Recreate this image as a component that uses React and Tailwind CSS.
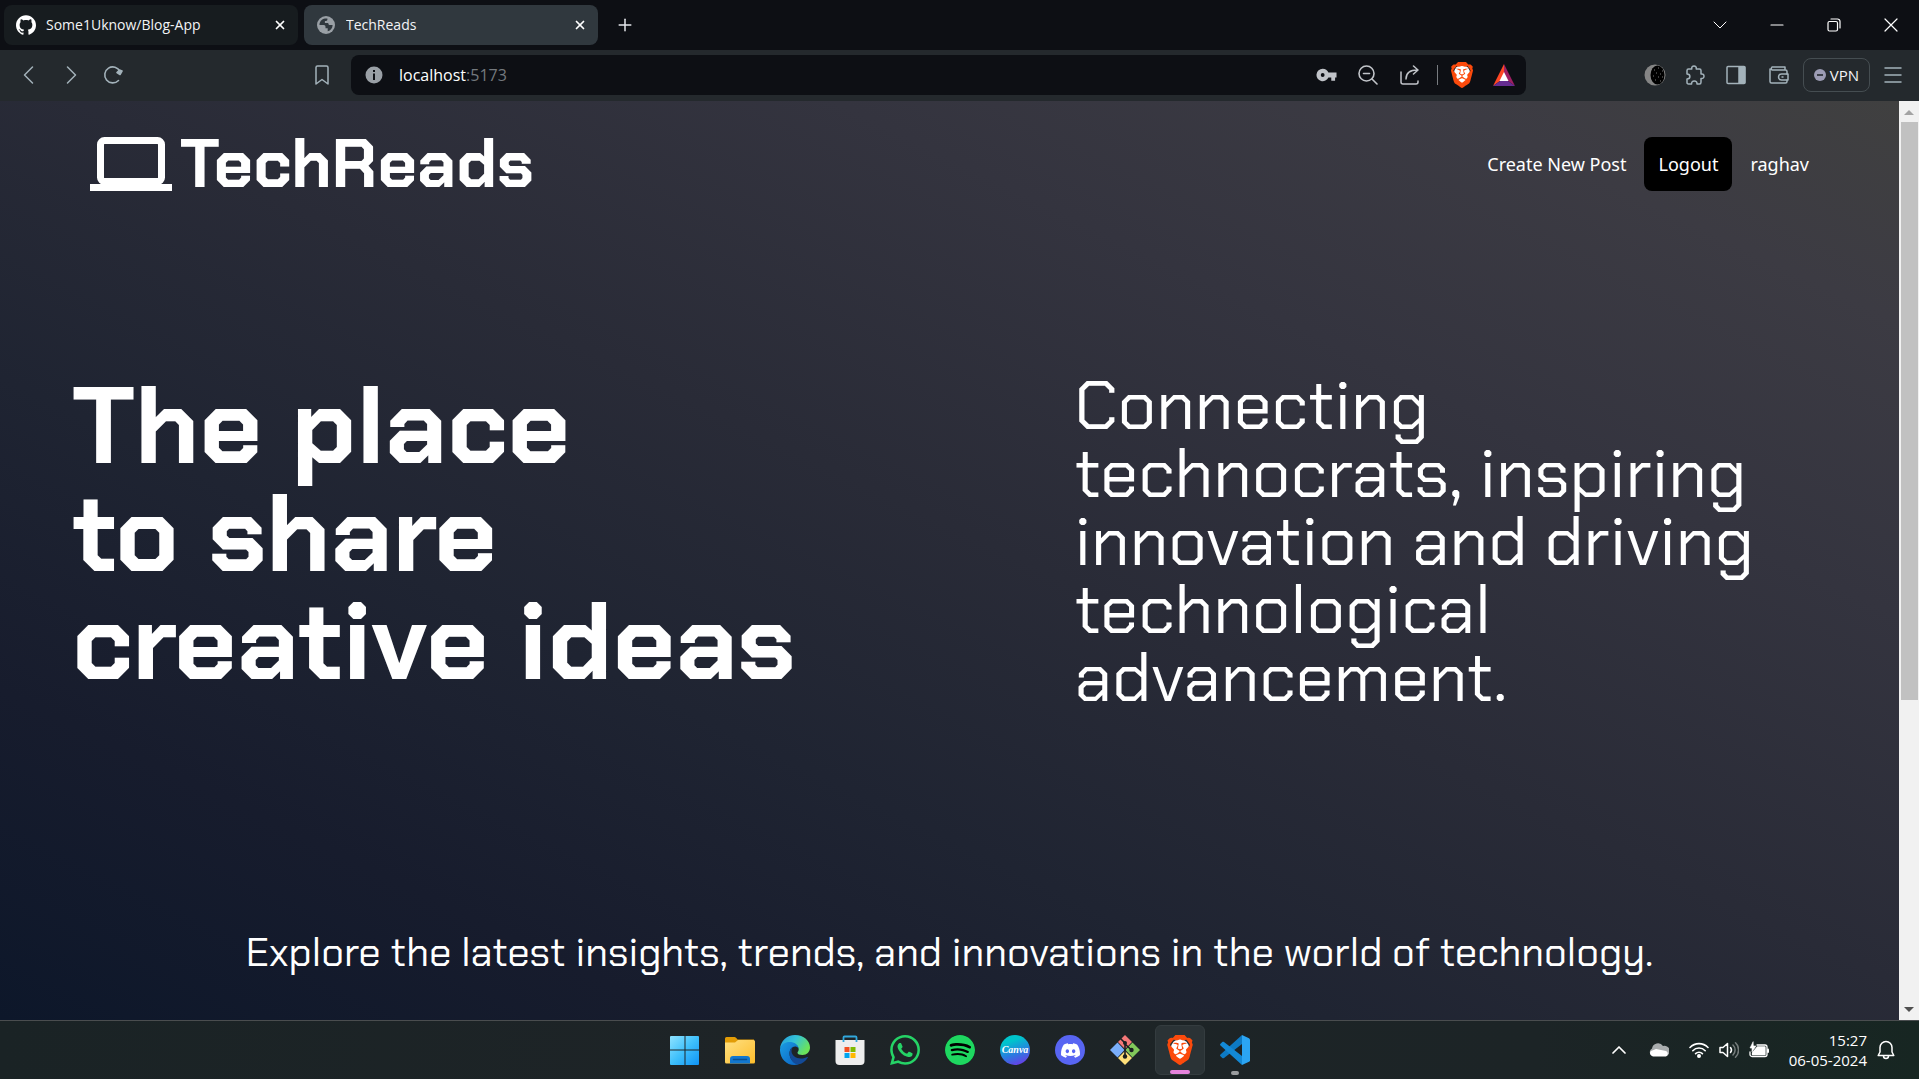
import React from "react";
import { SiGithub, SiWhatsapp, SiSpotify, SiDiscord, SiBrave } from "react-icons/si";
import { X, Plus } from "lucide-react";

const line = { fill: "none", stroke: "currentColor", strokeLinecap: "round", strokeLinejoin: "round" };

function Svg({ box = "0 0 24 24", className, children, sw = 1.5 }) {
  return (
    <svg viewBox={box} className={className} {...line} strokeWidth={sw} aria-hidden="true">
      {children}
    </svg>
  );
}

function BraveLion({ className }) {
  return (
    <span className={"relative grid place-items-center " + className}>
      <span className="absolute h-3/4 w-3/5 rounded-full bg-white" />
      <SiBrave className="relative h-full w-full text-[#fb4a0c]" />
    </span>
  );
}

function Tab({ active, icon, title }) {
  return (
    <div
      className={
        "flex h-10 w-[294px] items-center rounded-lg pl-3 pr-2 " + (active ? "bg-[#30383e]" : "bg-[#171c1f]")
      }
    >
      {icon}
      <span className="ml-2.5 flex-1 truncate text-sm text-gray-100">{title}</span>
      <button aria-label={"Close " + title} className="grid size-5 place-items-center text-white">
        <X size={14} strokeWidth={3} />
      </button>
    </div>
  );
}

function Globe() {
  return (
    <svg viewBox="0 0 20 20" className="size-5 shrink-0" aria-hidden="true">
      <circle cx="10" cy="10" r="9" fill="#9aa0a6" />
      <path
        d="M9 3.5C5.6 4 3.4 6.800 3.500 10h4.200c1.300 0 1.800.8 1.800 1.900v1.300h2.200v3.100c2.900-.8 4.900-3.300 4.900-6.300h-2.800c-.9 0-1.500-.7-1.500-1.500V8H8.900V5.900H10c.9 0 1.400-.5 1.400-1.400v-.9C10.600 3.400 9.800 3.400 9 3.500z"
        fill="#30383e"
      />
    </svg>
  );
}

function TitleBar() {
  return (
    <div className="flex h-[50px] items-center bg-[#0d0f14] pl-1">
      <div className="flex items-center gap-1.5">
        <Tab title="Some1Uknow/Blog-App" icon={<SiGithub className="size-5 shrink-0 text-white" />} />
        <Tab active title="TechReads" icon={<Globe />} />
      </div>
      <button aria-label="New tab" className="ml-[15px] grid size-6 place-items-center text-gray-200">
        <Plus size={20} strokeWidth={1.8} />
      </button>
      <div className="ml-auto flex text-white">
        <button aria-label="Search tabs" className="grid h-10 w-[57px] place-items-center">
          <Svg box="0 0 14 14" className="size-3.5" sw={1}><path d="M1 4l6 6 6-6" /></Svg>
        </button>
        <button aria-label="Minimize" className="grid h-10 w-[57px] place-items-center">
          <Svg box="0 0 14 14" className="size-3.5" sw={1.2}><path d="M1 7h12" /></Svg>
        </button>
        <button aria-label="Restore" className="grid h-10 w-[57px] place-items-center">
          <Svg box="0 0 14 14" className="size-3.5" sw={1.2}>
            <rect x="1" y="3.500" width="9.500" height="9.500" rx="1.500" />
            <path d="M4 1h6.500A2.500 2.500 0 0 1 13 3.500V10" />
          </Svg>
        </button>
        <button aria-label="Close window" className="grid h-10 w-[57px] place-items-center">
          <Svg box="0 0 14 14" className="size-3.5" sw={1.2}><path d="M1 1l12 12M13 1L1 13" /></Svg>
        </button>
      </div>
    </div>
  );
}

function BatTriangle() {
  return (
    <svg viewBox="0 0 24 24" className="size-6" aria-hidden="true">
      <path d="M12 1L1 23l11-8z" fill="#ff4724" />
      <path d="M12 1l11 22-11-8z" fill="#9e1f63" />
      <path d="M1 23h22l-7-5H8z" fill="#662d91" />
      <path d="M12 9L7.500 18h9z" fill="#fff" />
    </svg>
  );
}

function Toolbar() {
  return (
    <div className="flex h-[51px] items-center bg-[#24292d] pb-px text-[#a3b2ba]">
      <div className="flex w-[351px] items-center pl-2">
        <button aria-label="Back" className="grid h-10 w-[42px] place-items-center">
          <Svg box="0 0 20 20" className="size-5" sw={1.500}><path d="M13.500 2l-8 8 8 8" /></Svg>
        </button>
        <button aria-label="Forward" className="grid h-10 w-[42px] place-items-center">
          <Svg box="0 0 20 20" className="size-5" sw={1.500}><path d="M6.500 2l8 8-8 8" /></Svg>
        </button>
        <button aria-label="Reload" className="grid h-10 w-[42px] place-items-center">
          <Svg box="0 0 20 20" className="size-5" sw={1.600}>
            <path d="M15.500 15.500A8 8 0 1 1 17 6.500" />
            <path d="M14 7.500l3 2 2-3.500-2.500-1z" fill="currentColor" />
          </Svg>
        </button>
        <button aria-label="Bookmark this page" className="ml-auto mr-2 grid h-10 w-[42px] place-items-center">
          <Svg box="0 0 20 20" className="size-5" sw={1.500}>
            <path d="M4 2.500A1.500 1.500 0 0 1 5.500 1h9A1.500 1.500 0 0 1 16 2.500V19l-6-4.500L4 19z" />
          </Svg>
        </button>
      </div>
      <div className="flex h-10 flex-1 items-center rounded-lg bg-[#0d0f14] pl-3.5 pr-1 text-[#c1c4c9]">
        <svg viewBox="0 0 18 18" className="size-[18px]" aria-hidden="true">
          <circle cx="9" cy="9" r="8.500" fill="#9aa0a6" />
          <path d="M8 7.500h2V14H8zM8 4h2v2H8z" fill="#0d0f14" />
        </svg>
        <a href="http://localhost:5173" className="ml-4 flex-1 text-base text-white">
          localhost<span className="text-[#74797e]">:5173</span>
        </a>
        <button aria-label="Passwords" className="grid h-8 w-[42px] place-items-center">
          <svg viewBox="0 0 22 14" className="h-3.5 w-[21px]" aria-hidden="true">
            <path
              fillRule="evenodd"
              fill="currentColor"
              d="M7 0.500a6.500 6.500 0 1 0 6 9h3V13h4V9.500h1.500v-5H13a6.500 6.500 0 0 0-6-4zM7 5a2 2 0 1 1 0 4 2 2 0 0 1 0-4z"
            />
          </svg>
        </button>
        <button aria-label="Zoom out" className="grid h-8 w-[42px] place-items-center">
          <Svg box="0 0 20 20" className="size-5" sw={1.600}>
            <circle cx="8.500" cy="8.500" r="7.500" />
            <path d="M14 14l5 5M5.500 8.500h6" />
          </Svg>
        </button>
        <button aria-label="Share" className="grid h-8 w-[42px] place-items-center">
          <Svg box="0 0 20 20" className="size-5" sw={1.500}>
            <path d="M1 7v10a2 2 0 0 0 2 2h13a2 2 0 0 0 2-2v-1" />
            <path d="M6 14c0-6 4-9 11.500-9M13.500 1L18 5l-4.500 4" />
          </Svg>
        </button>
        <span className="ml-1.5 h-5 w-px bg-[#777b80]" />
        <button aria-label="Brave Shields" className="grid h-8 w-12 place-items-center">
          <BraveLion className="size-[26px]" />
        </button>
        <button aria-label="Brave Rewards" className="grid h-8 w-9 place-items-center">
          <BatTriangle />
        </button>
      </div>
      <div className="flex w-[393px] items-center justify-end">
        <button aria-label="Dark mode extension" className="grid h-10 w-10 place-items-center">
          <svg viewBox="0 0 22 22" className="size-[22px]" aria-hidden="true">
            <circle cx="11" cy="11" r="10.500" fill="#858585" />
            <ellipse cx="13.500" cy="11" rx="7" ry="9.500" fill="#000" />
            <path
              d="M10 6h1M14 4h1M18 7h1M12 9h1M16 10h1M9 12h1M14 13h1M18 13h1M11 16h1M16 17h1"
              stroke="#777"
              strokeWidth="1"
            />
          </svg>
        </button>
        <button aria-label="Extensions" className="grid h-10 w-10 place-items-center">
          <Svg box="0 0 20 20" className="size-5" sw={1.500}>
            <path d="M2 5.500C2 4.500 2.700 4 3.500 4h3.300C6.300 1.900 7.500 1 9 1s2.700.9 2.200 3h3.300c1 0 1.500.6 1.500 1.500V9c2-.4 3 .700 3 2.200S18 13.800 16 13.400v3.800c0 1-.6 1.800-1.500 1.800H12c.2-2-.9-3-2.700-3s-2.900 1-2.700 3H3.500C2.500 19 2 18.300 2 17.400V14c2 0 2.900-1 2.900-2.500S4 9 2 9z" />
          </Svg>
        </button>
        <button aria-label="Side panel" className="grid h-10 w-[42px] place-items-center">
          <Svg box="0 0 20 20" className="size-5" sw={1.500}>
            <rect x="1" y="1.500" width="18" height="17" rx="1" />
            <path d="M13 2h5.500v16H13z" fill="currentColor" />
          </Svg>
        </button>
        <button aria-label="Wallet" className="grid h-10 w-11 place-items-center">
          <Svg box="0 0 20 20" className="size-5" sw={1.500}>
            <path d="M18 9V6.500A1.500 1.500 0 0 0 16.500 5H3a2 2 0 0 1 0-3h13v3M1 4v12.500A1.500 1.500 0 0 0 2.500 18h14a1.500 1.500 0 0 0 1.500-1.500V15" />
            <path d="M19 9h-6.500a3 3 0 0 0 0 6H19zM13 12h1" />
          </Svg>
        </button>
        <button className="ml-0.5 flex h-[34px] w-[67px] items-center justify-center gap-1 rounded-lg border border-[#454d51] text-[15px] text-gray-100">
          <svg viewBox="0 0 12 12" className="size-3" aria-hidden="true">
            <circle cx="6" cy="6" r="6" fill="#9c9cb4" />
            <path d="M3 5.200h6v1.600H3z" fill="#24292d" />
          </svg>
          VPN
        </button>
        <button aria-label="Menu" className="grid h-10 w-[49px] place-items-center pr-1">
          <Svg box="0 0 18 18" className="size-[18px]" sw={1.500}><path d="M1 2h16M1 9h16M1 16h16" /></Svg>
        </button>
      </div>
    </div>
  );
}

function Page() {
  return (
    <main className="flex-1 bg-[linear-gradient(to_top_right,#0d172a,#171c2d_18%,#1f2432_35%,#292b37_52%,#34343f_72%,#3c3b43_88%,#404040)] text-white">
      <header className="flex items-center justify-between px-[90px] pt-[29px]">
        <a href="#home" className="flex items-center gap-2 font-['Chakra_Petch','Inter',sans-serif]">
          <svg viewBox="0 0 82 54" className="h-[54px] w-[82px]" aria-hidden="true">
            <rect x="10.500" y="3.500" width="61" height="41" rx="4" fill="none" stroke="#fff" strokeWidth="7" />
            <path d="M0 47h82v7H0z" fill="#fff" />
          </svg>
          <span className="text-[68px] leading-[68px] font-bold">TechReads</span>
        </a>
        <nav className="flex items-center gap-[18px] font-['Noto_Sans',sans-serif] text-lg">
          <a href="#new">Create New Post</a>
          <button className="h-[54px] rounded-lg bg-black px-3.5">Logout</button>
          <a href="#profile">raghav</a>
        </nav>
      </header>
      <section className="mt-[174px] grid grid-cols-2 gap-[250px] px-[72px]">
        <h1 className="font-['Chakra_Petch','Inter',sans-serif] text-[108px] leading-[108px] font-bold whitespace-nowrap">
          The place
          <br />
          to share
          <br />
          creative ideas
        </h1>
        <p className="font-['Chakra_Petch','Roboto',sans-serif] text-[68px] leading-[68px] whitespace-nowrap">
          Connecting
          <br />
          technocrats, inspiring
          <br />
          innovation and driving
          <br />
          technological
          <br />
          advancement.
        </p>
      </section>
      <p className="mt-[210px] text-center font-['Chakra_Petch','Roboto',sans-serif] text-[40px] leading-[60px]">
        Explore the latest insights, trends, and innovations in the world of technology.
      </p>
    </main>
  );
}

function Scrollbar() {
  return (
    <div className="flex w-5 flex-col items-center bg-[#f1f1f1]">
      <svg viewBox="0 0 20 21" className="h-[21px] w-5" aria-hidden="true">
        <path d="M10 9l5 5H5z" fill="#a3a3a3" />
      </svg>
      <div className="w-[17px] flex-[577] bg-[#c1c1c1]" />
      <div className="flex-[299]" />
      <svg viewBox="0 0 20 21" className="h-[21px] w-5" aria-hidden="true">
        <path d="M10 13l5-5H5z" fill="#505050" />
      </svg>
    </div>
  );
}

function WindowsLogo() {
  return (
    <svg viewBox="0 0 30 30" className="size-[30px]">
      <defs>
        <linearGradient id="win" x1="0" y1="0" x2="1" y2="1">
          <stop offset="0" stopColor="#8fe3ff" />
          <stop offset=".5" stopColor="#3fc0fb" />
          <stop offset="1" stopColor="#0f93f5" />
        </linearGradient>
      </defs>
      <path fill="url(#win)" d="M1 1h13.500v13.500H0V2a1 1 0 0 1 1-1zM15.500 1H28a1 1 0 0 1 1 1v12.500H15.500zM0 15.500h14.500V30H1a1 1 0 0 1-1-1zM15.500 15.500H29V29a1 1 0 0 1-1 1H15.500z" />
    </svg>
  );
}

function FolderLogo() {
  return (
    <svg viewBox="0 0 30 30" className="size-[30px]">
      <defs>
        <linearGradient id="fold" x1="0" y1="0" x2="1" y2="1">
          <stop offset="0" stopColor="#ffe082" />
          <stop offset="1" stopColor="#fdbd2b" />
        </linearGradient>
      </defs>
      <path d="M0 3.500A1.500 1.500 0 0 1 1.500 2h8c1 0 2 1 3 2.500H29V12H0z" fill="#e29c06" />
      <path d="M0 7.500h10l3-2.500h15.500A1.500 1.500 0 0 1 30 6.500V27a1.500 1.500 0 0 1-1.500 1.500h-27A1.500 1.500 0 0 1 0 27z" fill="url(#fold)" />
      <path d="M5 28.500V24a3 3 0 0 1 3-3h14a3 3 0 0 1 3 3v4.500z" fill="#1277cf" />
      <path d="M8.500 24.500h13" stroke="#0a4f91" strokeWidth="1.500" strokeLinecap="round" />
    </svg>
  );
}

function EdgeLogo() {
  return (
    <svg viewBox="0 0 30 30" className="size-[30px]">
      <defs>
        <linearGradient id="edgeTop" x1="0" y1="0" x2="1" y2=".5">
          <stop offset="0" stopColor="#2398de" />
          <stop offset=".5" stopColor="#34c3d6" />
          <stop offset="1" stopColor="#6be35a" />
        </linearGradient>
        <linearGradient id="edgeLeft" x1="0" y1="0" x2="1" y2="1">
          <stop offset="0" stopColor="#1b9de2" />
          <stop offset="1" stopColor="#0a62c4" />
        </linearGradient>
      </defs>
      <path d="M0 14C.5 6 7 0 15 0c9 0 15 6 15 12.500 0 4.500-3.300 7.500-7.500 7.500-3 0-5-1-5-2.300 0-.7 1.200-1.300 1.200-3.400C18.700 11 15 8 10 8 5 8 1.500 10.500 0 14z" fill="url(#edgeTop)" />
      <path d="M0 14c1-4.500 5-7 9.500-7 5 0 8.500 2.500 9.200 6.500-1-1.500-2.500-2-3.700-2-3 0-5.500 3-5.500 7 0 5.500 4 9.800 9.500 10.800C8 32.500-.5 24 0 14z" fill="url(#edgeLeft)" />
      <path d="M9.600 18c0-3 1.400-5.500 3.400-6.300-1 1.300-1.500 2.800-1.500 4.300 0 4 4 7.500 9.500 7.500 2.500 0 5-.7 6.300-1.500.5-.3.900.1.600.6-2.500 4-6 6.500-9.400 6.700-5 0-8.900-5-8.900-11.300z" fill="#134a97" />
    </svg>
  );
}

function StoreLogo() {
  return (
    <svg viewBox="0 0 30 30" className="size-[30px]">
      <path d="M.5 5h29v21a4 4 0 0 1-4 4h-21a4 4 0 0 1-4-4z" fill="#eeeeee" />
      <path d="M8.500 7V2.500a1 1 0 0 1 1-1h11a1 1 0 0 1 1 1V7" fill="none" stroke="#31a8dd" strokeWidth="1.800" />
      <path d="M9.500 12h5v5h-5z" fill="#f25022" />
      <path d="M15.500 12h5v5h-5z" fill="#7fba00" />
      <path d="M9.500 18h5v5h-5z" fill="#00a4ef" />
      <path d="M15.500 18h5v5h-5z" fill="#ffb900" />
    </svg>
  );
}

function SpotifyLogo() {
  return (
    <span className="grid size-[30px] place-items-center rounded-full bg-black">
      <SiSpotify className="size-[30px] text-[#1ed760]" />
    </span>
  );
}

function CanvaLogo() {
  return (
    <span className="grid size-[30px] place-items-center rounded-full bg-[linear-gradient(160deg,#00c4cc_25%,#2a7be0_60%,#7d2ae8)]">
      <span className="font-['Liberation_Serif',serif] text-[10px] leading-none font-bold text-white italic">Canva</span>
    </span>
  );
}

function DiscordLogo() {
  return (
    <span className="grid size-[30px] place-items-center rounded-full bg-[#5865f2]">
      <SiDiscord className="size-[19px] text-white" />
    </span>
  );
}

function GitLogo() {
  return (
    <svg viewBox="0 0 30 30" className="size-[30px]">
      <path d="M15 0l7 7-7 7-7-7z" fill="#f57878" />
      <path d="M7.500 7.500l7 7.500-7 7.500L0 15z" fill="#7aaefa" />
      <path d="M22.500 7.500L30 15l-7.500 7.500-7-7.500z" fill="#82c85a" />
      <path d="M15 16l7 7-7 7-7-7z" fill="#ffe07a" />
      <path d="M10 3l5 5v13.500M15 9l6.500 6" stroke="#1b1f21" strokeWidth="1.600" fill="none" />
      <circle cx="15" cy="8" r="2" fill="#1b1f21" />
      <circle cx="15" cy="21.500" r="2.200" fill="#1b1f21" />
      <circle cx="21.500" cy="15" r="2.200" fill="#1b1f21" />
    </svg>
  );
}

function CodeLogo() {
  return (
    <svg viewBox="0 0 30 30" className="size-[30px]">
      <path d="M22 0v9L4 23c-.5.4-1.200.4-1.700 0L.5 21.300c-.6-.5-.6-1.300 0-1.800z" fill="#0d7ac4" />
      <path d="M22 30v-9L4 7c-.5-.4-1.200-.4-1.700 0L.5 8.700c-.6.5-.6 1.300 0 1.800z" fill="#1389d6" />
      <path d="M22 0l7 3.200c.6.300 1 .9 1 1.600v20.400c0 .7-.4 1.300-1 1.600L22 30z" fill="#2ba5f3" />
    </svg>
  );
}

const apps = [
  { name: "Start", icon: <WindowsLogo /> },
  { name: "File Explorer", icon: <FolderLogo /> },
  { name: "Edge", icon: <EdgeLogo /> },
  { name: "Microsoft Store", icon: <StoreLogo /> },
  { name: "WhatsApp", icon: <SiWhatsapp className="size-[30px] text-[#25d366]" /> },
  { name: "Spotify", icon: <SpotifyLogo /> },
  { name: "Canva", icon: <CanvaLogo /> },
  { name: "Discord", icon: <DiscordLogo /> },
  { name: "Git", icon: <GitLogo /> },
  { name: "Brave", icon: <BraveLion className="size-[30px]" />, active: true },
  { name: "VS Code", icon: <CodeLogo />, open: true },
];

function Taskbar() {
  return (
    <footer className="grid h-[59px] grid-cols-[1fr_auto_1fr] items-center border-t border-[#4a4d4f] bg-[linear-gradient(90deg,#1a2325,#1e2427_40%,#1c2426_80%,#172622)] text-white">
      <span />
      <div className="flex gap-[5px] pl-px">
        {apps.map((a) => (
          <button
            key={a.name}
            aria-label={a.name}
            className={
              "relative grid size-[50px] place-items-center rounded-md " +
              (a.active ? "border border-[#343c3f] bg-[#2b3336]" : "")
            }
          >
            {a.icon}
            {a.active && <span className="absolute bottom-0 h-1 w-5 rounded-full bg-[#e583dc]" />}
            {a.open && <span className="absolute bottom-0 h-1 w-2 rounded-full bg-[#9a9d9f]" />}
          </button>
        ))}
      </div>
      <div className="flex items-center justify-end pr-6">
        <button aria-label="Show hidden icons" className="mr-5 grid size-5 place-items-center">
          <Svg box="0 0 14 14" className="size-3.5" sw={1.700}><path d="M1 10l6-6 6 6" /></Svg>
        </button>
        <svg viewBox="0 0 20 14" className="mr-5 h-3.5 w-5" aria-label="OneDrive">
          <path d="M4 13a4 4 0 0 1-1-7.500A6 6 0 0 1 14 3a5 5 0 0 1 3 10z" fill="#a9adae" />
          <path d="M3 13a3 3 0 0 1-1-5l5-2 10 2a3 3 0 0 1 0 5.500H4z" fill="#fff" />
        </svg>
        <Svg box="0 0 20 16" className="mr-2.5 h-4 w-5" sw={1.600}>
          <path d="M1 5.500a12.500 12.500 0 0 1 18 0M3.800 8.700a8.600 8.600 0 0 1 12.400 0M6.600 11.600a4.800 4.800 0 0 1 6.800 0" />
          <circle cx="10" cy="14" r="1.200" fill="currentColor" />
        </Svg>
        <Svg box="0 0 20 18" className="mr-2.5 h-[18px] w-5" sw={1.500}>
          <path d="M1 6.500h3L8.500 2.500v13L4 11.500H1z" />
          <path d="M11.500 6.500a4 4 0 0 1 0 5" />
          <path d="M14 4a7 7 0 0 1 0 10M16.500 1.800a10 10 0 0 1 0 14.400" opacity=".4" />
        </Svg>
        <Svg box="0 0 20 18" className="h-[18px] w-5" sw={1.300}>
          <path d="M8 4h8a2 2 0 0 1 2 2v7.500a2 2 0 0 1-2 2H3a2 2 0 0 1-2-2V11" />
          <path d="M8.500 6H16v7.500H3.500V12z" fill="currentColor" />
          <path d="M19 8.500v2.500" strokeWidth="2" />
          <path d="M4 1L1 7h2v4l4-6H4.500z" fill="currentColor" strokeWidth=".6" />
        </Svg>
        <time className="ml-5 mr-2.5 text-right text-[15px] leading-5">
          15:27
          <br />
          06-05-2024
        </time>
        <button aria-label="Notifications">
          <Svg box="0 0 18 20" className="h-5 w-[18px]" sw={1.500}>
            <path d="M9 1.500a6 6 0 0 0-6 6V12l-1.800 3.500h15.600L15 12V7.500a6 6 0 0 0-6-6zM6.500 16a2.500 2.500 0 0 0 5 0" />
          </Svg>
        </button>
      </div>
    </footer>
  );
}

export default function App() {
  return (
    <div className="flex min-h-screen flex-col font-['Open_Sans','Noto_Sans',sans-serif]">
      <TitleBar />
      <Toolbar />
      <div className="flex flex-1">
        <Page />
        <Scrollbar />
      </div>
      <Taskbar />
    </div>
  );
}
